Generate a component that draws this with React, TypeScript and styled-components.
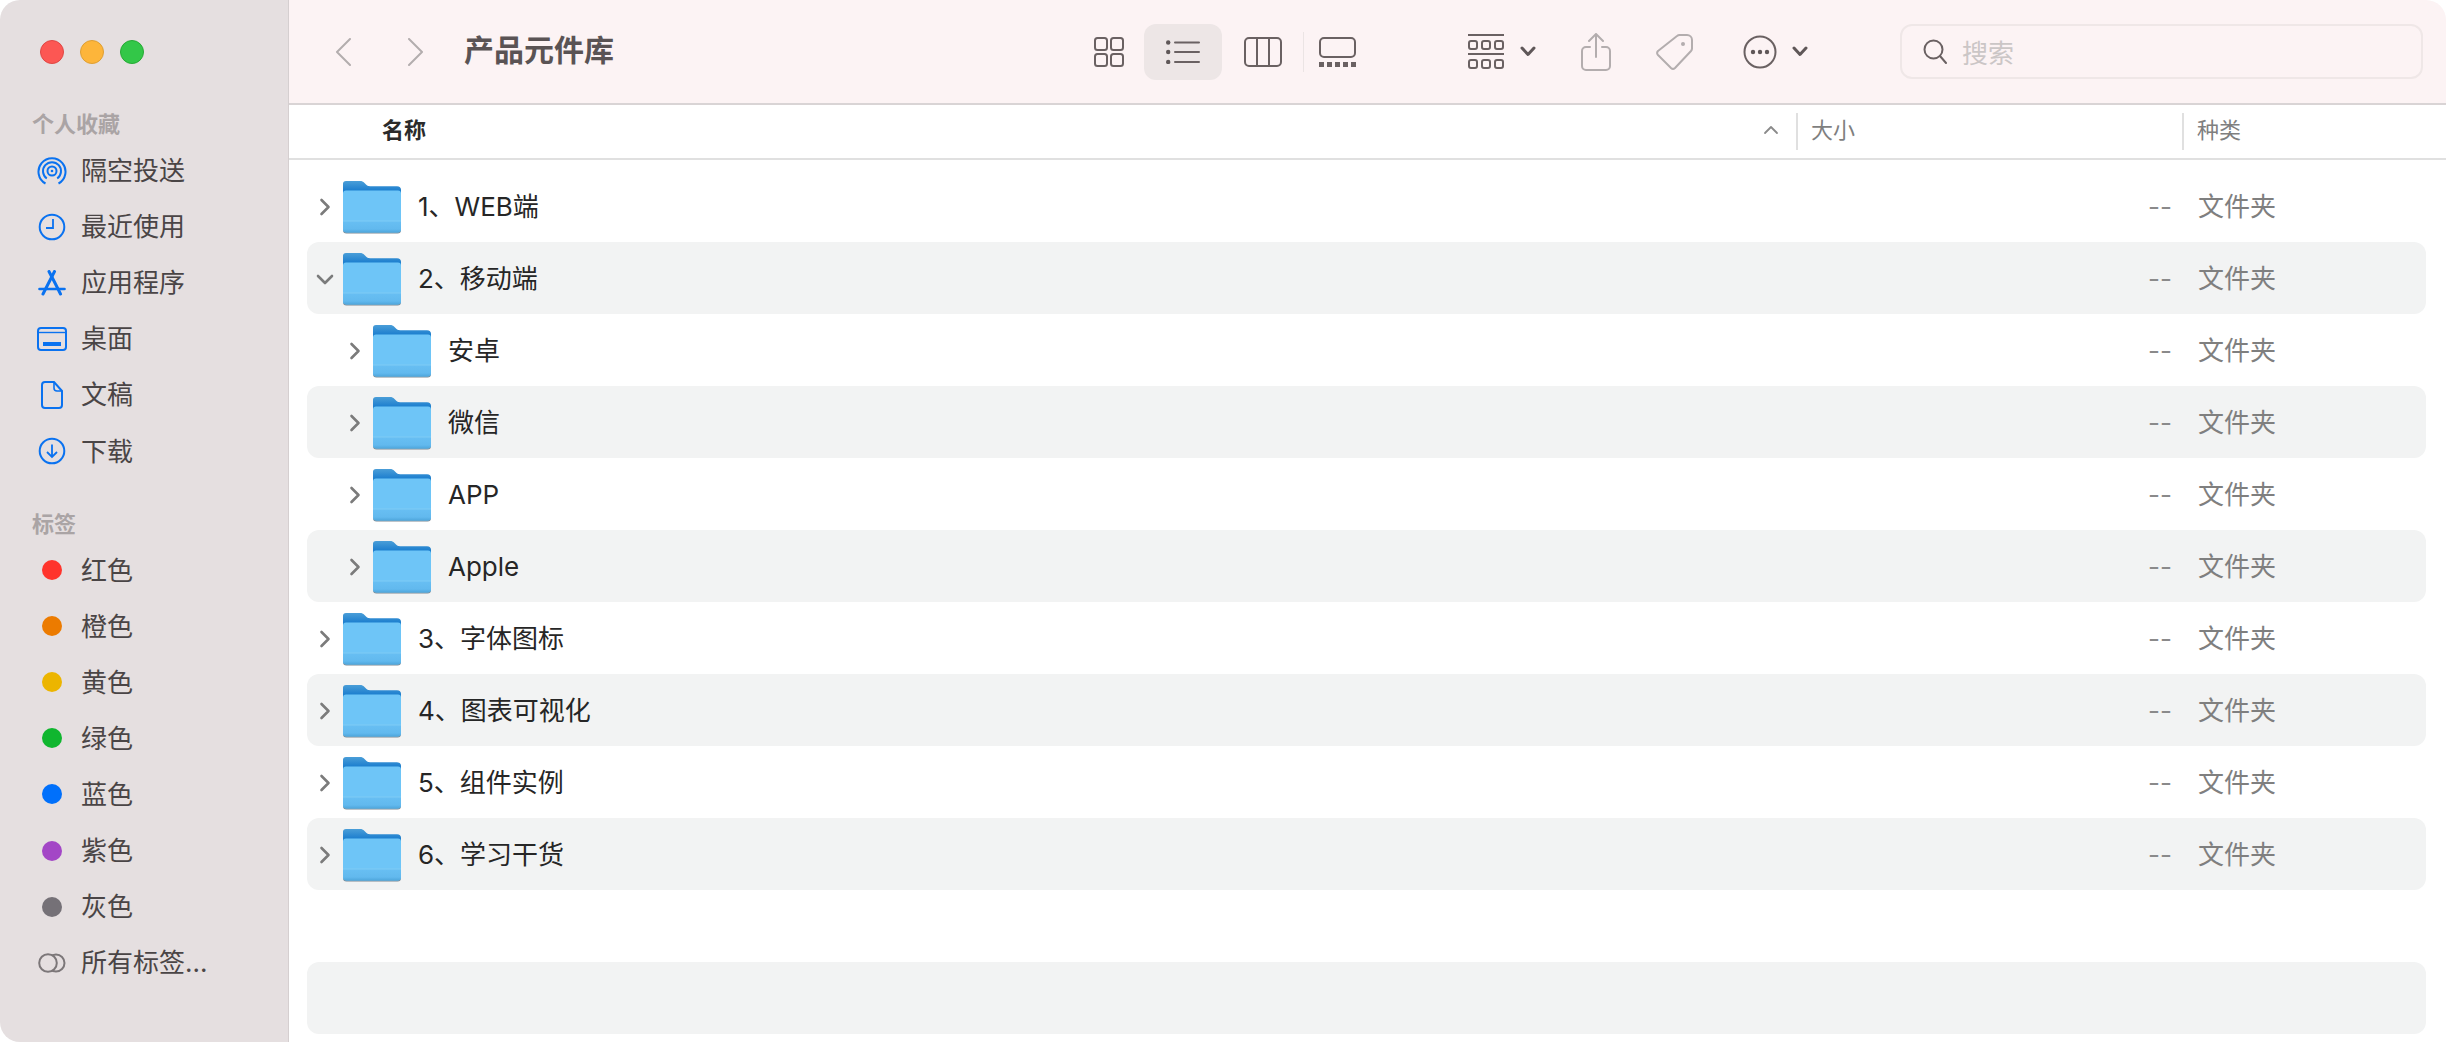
import React from "react";
import styled, { createGlobalStyle } from "styled-components";

const GlobalStyle = createGlobalStyle`
  html, body {
    margin: 0;
    padding: 0;
    background: #fff;
  }
  * {
    box-sizing: border-box;
  }
  body {
    font-family: Inter, "Noto Sans CJK SC", sans-serif;
  }
`;

const favorites = [
  { name: "隔空投送", icon: <AirDropIcon /> },
  { name: "最近使用", icon: <ClockIcon /> },
  { name: "应用程序", icon: <AppsIcon /> },
  { name: "桌面", icon: <DesktopIcon /> },
  { name: "文稿", icon: <DocIcon /> },
  { name: "下载", icon: <DownloadIcon /> },
];

const tags = [
  { name: "红色", color: "#ff342c" },
  { name: "橙色", color: "#ec7b00" },
  { name: "黄色", color: "#ecb500" },
  { name: "绿色", color: "#10b62f" },
  { name: "蓝色", color: "#0070fb" },
  { name: "紫色", color: "#a346c6" },
  { name: "灰色", color: "#757177" },
];

const files = [
  { name: "1、WEB端", depth: 0 },
  { name: "2、移动端", depth: 0, open: true },
  { name: "安卓", depth: 1 },
  { name: "微信", depth: 1 },
  { name: "APP", depth: 1 },
  { name: "Apple", depth: 1 },
  { name: "3、字体图标", depth: 0 },
  { name: "4、图表可视化", depth: 0 },
  { name: "5、组件实例", depth: 0 },
  { name: "6、学习干货", depth: 0 },
];

const App = () => {
  return (
    <Window>
      <GlobalStyle />
      <Sidebar>
        <Lights>
          <Light $color="#fc5753" $edge="#df4744" />
          <Light $color="#fdb53a" $edge="#de9f34" />
          <Light $color="#33c748" $edge="#27aa35" />
        </Lights>
        <SectionLabel>个人收藏</SectionLabel>
        {favorites.map((f) => (
          <SideItem key={f.name}>
            <SideIcon>{f.icon}</SideIcon>
            <SideText>{f.name}</SideText>
          </SideItem>
        ))}
        <SectionLabel $second>标签</SectionLabel>
        {tags.map((t) => (
          <SideItem key={t.name}>
            <SideIcon>
              <TagDot $color={t.color} />
            </SideIcon>
            <SideText>{t.name}</SideText>
          </SideItem>
        ))}
        <SideItem>
          <SideIcon>
            <AllTagsIcon />
          </SideIcon>
          <SideText>所有标签...</SideText>
        </SideItem>
      </Sidebar>
      <Main>
        <Toolbar>
          <ToolIcon width="16" height="28" viewBox="0 0 16 28" $muted>
            <path d="M15 1 2 14l13 13" />
          </ToolIcon>
          <ToolIcon width="16" height="28" viewBox="0 0 16 28" $muted $gap={57}>
            <path d="M1 1l13 13L1 27" />
          </ToolIcon>
          <Title>产品元件库</Title>
          <ViewGroup>
            <ToolIcon width="30" height="30" viewBox="0 0 30 30">
              <rect x="1" y="1" width="12" height="12" rx="2.5" />
              <rect x="17" y="1" width="12" height="12" rx="2.5" />
              <rect x="1" y="17" width="12" height="12" rx="2.5" />
              <rect x="17" y="17" width="12" height="12" rx="2.5" />
            </ToolIcon>
            <ActiveView>
              <ToolIcon width="34" height="24" viewBox="0 0 34 24">
                <circle cx="2.2" cy="2.5" r="2.2" fill="#5f5758" stroke="none" />
                <circle cx="2.2" cy="12" r="2.2" fill="#5f5758" stroke="none" />
                <circle cx="2.2" cy="22" r="2.2" fill="#5f5758" stroke="none" />
                <path d="M9 2.5h24M9 12h24M9 22h24" />
              </ToolIcon>
            </ActiveView>
            <ToolIcon width="38" height="30" viewBox="0 0 38 30" $gap={22}>
              <rect x="1" y="1" width="36" height="28" rx="4" />
              <path d="M13 1v28M25 1v28" />
            </ToolIcon>
            <ViewDivider />
            <ToolIcon width="37" height="30" viewBox="0 0 37 30" $gap={15}>
              <rect x="1" y="1" width="35" height="19" rx="4" />
              <path
                d="M0 25h5v5H0zM8 25h5v5H8zM16 25h5v5h-5zM24 25h5v5h-5zM32 25h5v5h-5z"
                fill="#6a6162"
                stroke="none"
              />
            </ToolIcon>
            <ToolIcon width="36" height="36" viewBox="0 0 36 36" $gap={112}>
              <path d="M0 1h36M0 20h36" />
              <rect x="1" y="7" width="8" height="8" rx="2" />
              <rect x="14" y="7" width="8" height="8" rx="2" />
              <rect x="27" y="7" width="8" height="8" rx="2" />
              <rect x="1" y="26" width="8" height="8" rx="2" />
              <rect x="14" y="26" width="8" height="8" rx="2" />
              <rect x="27" y="26" width="8" height="8" rx="2" />
            </ToolIcon>
            <MenuChevron $gap={16} />
            <ToolIcon width="30" height="38" viewBox="0 0 30 38" $muted $gap={45}>
              <path d="M9 14H5a4 4 0 0 0-4 4v15a4 4 0 0 0 4 4h20a4 4 0 0 0 4-4V18a4 4 0 0 0-4-4h-4" />
              <path d="M15 24V2M8 8l7-7 7 7" />
            </ToolIcon>
            <ToolIcon width="38" height="38" viewBox="0 0 38 38" $muted $gap={45}>
              <path d="M24 2h7a5 5 0 0 1 5 5v8a4 4 0 0 1-1 3L19 35a3 3 0 0 1-4 0L2 22a3 3 0 0 1 0-4L21 3a4 4 0 0 1 3-1z" />
              <circle cx="27" cy="11" r="2" fill="#b3adae" stroke="none" />
            </ToolIcon>
            <ToolIcon width="34" height="34" viewBox="0 0 34 34" $gap={49}>
              <circle cx="17" cy="17" r="15.5" />
              <circle cx="10" cy="17" r="2.2" fill="#5f5758" stroke="none" />
              <circle cx="17" cy="17" r="2.2" fill="#5f5758" stroke="none" />
              <circle cx="24" cy="17" r="2.2" fill="#5f5758" stroke="none" />
            </ToolIcon>
            <MenuChevron $gap={15} />
          </ViewGroup>
          <SearchBox>
            <ToolIcon width="24" height="26" viewBox="0 0 24 26">
              <circle cx="10.5" cy="10.5" r="9" />
              <path d="M17 17l6 7" />
            </ToolIcon>
            <SearchHint>搜索</SearchHint>
          </SearchBox>
        </Toolbar>
        <ColumnHeader>
          <NameHead>
            名称
            <SortMark width="16" height="10" viewBox="0 0 16 10">
              <path d="M2 8l6-6 6 6" />
            </SortMark>
          </NameHead>
          <OtherHead>大小</OtherHead>
          <OtherHead>种类</OtherHead>
        </ColumnHeader>
        <FileList>
          {files.map((f, i) => (
            <Row key={f.name} $striped={i % 2 === 1}>
              <NameCell $depth={f.depth}>
                <Disclosure $open={f.open} />
                <FolderIcon />
                <FileName>{f.name}</FileName>
              </NameCell>
              <SizeCell>--</SizeCell>
              <KindCell>文件夹</KindCell>
            </Row>
          ))}
          <Row />
          <Row $striped />
        </FileList>
      </Main>
    </Window>
  );
};

function AirDropIcon() {
  return (
    <svg width="30" height="30" viewBox="0 0 30 30" fill="none" stroke="#0a72f0" strokeWidth="2">
      <path d="M8.5 27.5A13.5 13.5 0 1 1 21.5 27.5" />
      <path d="M9.8 22.5A9 9 0 1 1 20.2 22.5" />
      <circle cx="15" cy="15" r="4.5" />
      <circle cx="15" cy="15" r="1.3" fill="#0a72f0" stroke="none" />
    </svg>
  );
}

function ClockIcon() {
  return (
    <svg width="28" height="28" viewBox="0 0 28 28" fill="none" stroke="#0a72f0" strokeWidth="2">
      <circle cx="14" cy="14" r="12.3" />
      <path d="M15 6v9H8" strokeWidth="1.8" />
    </svg>
  );
}

function AppsIcon() {
  return (
    <svg width="28" height="26" viewBox="0 0 28 26" fill="none" stroke="#0a72f0" strokeWidth="3" strokeLinecap="round">
      <path d="M11 1.5 17 13l5.5 11" />
      <path d="M16.5 1.5 5 24" />
      <path d="M1.5 19h25" strokeWidth="2.6" />
    </svg>
  );
}

function DesktopIcon() {
  return (
    <svg width="30" height="24" viewBox="0 0 30 24" fill="none" stroke="#0a72f0" strokeWidth="2">
      <rect x="1" y="1" width="28" height="22" rx="3" />
      <path d="M1 5.500h28" strokeWidth="1.4" />
      <rect x="6" y="15" width="18" height="4" fill="#0a72f0" stroke="none" />
    </svg>
  );
}

function DocIcon() {
  return (
    <svg width="22" height="28" viewBox="0 0 22 28" fill="none" stroke="#0a72f0" strokeWidth="2">
      <path d="M4 1h9l8 9v14a3 3 0 0 1-3 3H4a3 3 0 0 1-3-3V4a3 3 0 0 1 3-3z" />
      <path d="M13 1v6a3 3 0 0 0 3 3h5" strokeWidth="1.6" />
    </svg>
  );
}

function DownloadIcon() {
  return (
    <svg width="28" height="28" viewBox="0 0 28 28" fill="none" stroke="#0a72f0" strokeWidth="2">
      <circle cx="14" cy="14" r="12.3" />
      <path d="M14 7.500v12M9 15l5 5 5-5" strokeWidth="1.8" />
    </svg>
  );
}

function AllTagsIcon() {
  return (
    <svg width="28" height="20" viewBox="0 0 28 20" fill="none" stroke="#7c7779" strokeWidth="2">
      <circle cx="18" cy="10" r="8.5" />
      <circle cx="10" cy="10" r="8.8" fill="#e5dfe0" />
    </svg>
  );
}

function FolderIcon() {
  return (
    <svg width="58" height="53" viewBox="0 0 58 53">
      <defs>
        <linearGradient id="folder-back" x1="0" y1="0" x2="0" y2="1">
          <stop offset="0" stopColor="#4a9ed8" />
          <stop offset="0.3" stopColor="#1f80cf" />
          <stop offset="1" stopColor="#1f80cf" />
        </linearGradient>
        <linearGradient id="folder-band" x1="0" y1="0" x2="0" y2="1">
          <stop offset="0" stopColor="#68bff3" />
          <stop offset="0.7" stopColor="#62b9ee" />
          <stop offset="1" stopColor="#4ea6dc" />
        </linearGradient>
      </defs>
      <path
        d="M3 1h14c2 0 3 .6 4.500 2l2 2c1 .8 2 1.200 3.500 1.200H54a4 4 0 0 1 4 4V49a3.500 3.500 0 0 1-3.500 3.500h-51A3.500 3.500 0 0 1 0 49V4a3 3 0 0 1 3-3z"
        fill="#7e8a93"
      />
      <path
        d="M3 0h14c2 0 3 .6 4.500 2l2 2c1 .8 2 1.200 3.500 1.200H54a4 4 0 0 1 4 4V30H0V3a3 3 0 0 1 3-3z"
        fill="url(#folder-back)"
      />
      <path
        d="M3 9.500h52a3 3 0 0 1 3 3V48a3.500 3.500 0 0 1-3.500 3.500h-51A3.500 3.500 0 0 1 0 48V12.500a3 3 0 0 1 3-3z"
        fill="#6ec5f7"
      />
      <path
        d="M0 40h58v8a3.500 3.500 0 0 1-3.500 3.500h-51A3.500 3.500 0 0 1 0 48z"
        fill="url(#folder-band)"
      />
      <path d="M0 40h58" stroke="#7fcbf5" strokeWidth="1" />
    </svg>
  );
}

const Window = styled.div`
  display: flex;
  width: 100vw;
  height: 100vh;
  overflow: hidden;
  border-radius: 20px;
  background: #fff;
`;

const Sidebar = styled.aside`
  flex: 0 0 289px;
  background: #e5dfe0;
  border-right: 1px solid #d5cfd0;
  color: #4a4546;
`;

const Lights = styled.div`
  display: flex;
  gap: 16px;
  padding: 40px 0 0 40px;
  height: 106px;
`;

const Light = styled.span<{ $color: string; $edge: string }>`
  width: 24px;
  height: 24px;
  border-radius: 50%;
  background: ${(p) => p.$color};
  border: 1px solid ${(p) => p.$edge};
`;

const SectionLabel = styled.div<{ $second?: boolean }>`
  height: 36px;
  line-height: 36px;
  margin-top: ${(p) => (p.$second ? "27px" : "0")};
  padding-left: 32px;
  font-size: 22px;
  font-weight: 700;
  color: #aaa4a5;
`;

const SideItem = styled.div`
  display: flex;
  align-items: center;
  height: 56.1px;
  padding: 1px 0 0 36px;
  font-size: 26px;
  line-height: 1;
`;

const SideIcon = styled.span`
  display: flex;
  align-items: center;
  justify-content: center;
  width: 32px;
  margin-right: 13px;
`;

const SideText = styled.span`
  padding-top: 1px;
`;

const TagDot = styled.span<{ $color: string }>`
  width: 20px;
  height: 20px;
  border-radius: 50%;
  background: ${(p) => p.$color};
`;

const Main = styled.main`
  flex: 1;
  min-width: 0;
  display: flex;
  flex-direction: column;
`;

const Toolbar = styled.header`
  display: flex;
  align-items: center;
  height: 105px;
  flex: none;
  padding: 0 23px 0 46px;
  background: #fcf3f4;
  border-bottom: 2px solid #d9d4d5;
`;

const ToolIcon = styled.svg<{ $muted?: boolean; $gap?: number }>`
  flex: none;
  display: block;
  margin-left: ${(p) => p.$gap || 0}px;
  fill: none;
  stroke: ${(p) => (p.$muted ? "#b3adae" : "#6a6162")};
  stroke-width: 2;
  stroke-linecap: round;
  stroke-linejoin: round;
`;

const Title = styled.h1`
  margin: 0 0 3px 40px;
  font-size: 30px;
  font-weight: 700;
  line-height: 1;
  color: #5a5354;
`;

const ViewGroup = styled.div`
  display: flex;
  align-items: center;
  margin-left: auto;
`;

const ActiveView = styled.div`
  display: flex;
  align-items: center;
  justify-content: center;
  width: 78px;
  height: 56px;
  margin-left: 20px;
  border-radius: 12px;
  background: #ede6e6;
`;

const ViewDivider = styled.span`
  width: 1px;
  height: 40px;
  margin-left: 21px;
  background: #ebe4e4;
`;

const MenuChevronSvg = styled.svg<{ $gap: number }>`
  flex: none;
  margin-left: ${(p) => p.$gap}px;
  fill: none;
  stroke: #5f5758;
  stroke-width: 3;
  stroke-linecap: round;
  stroke-linejoin: round;
`;

const MenuChevron = ({ $gap }: { $gap: number }) => (
  <MenuChevronSvg $gap={$gap} width="16" height="11" viewBox="0 0 16 11">
    <path d="M2 2l6 6.500L14 2" />
  </MenuChevronSvg>
);

const SearchBox = styled.div`
  display: flex;
  align-items: center;
  flex: none;
  width: 523px;
  height: 55px;
  margin-left: 92px;
  padding-left: 21px;
  border: 2px solid #efe7e7;
  border-radius: 12px;
`;

const SearchHint = styled.span`
  margin: 5px 0 0 15px;
  font-size: 26px;
  line-height: 1;
  color: #cbc6c6;
`;

const ColumnHeader = styled.div`
  display: grid;
  grid-template-columns: 1507px 386px 1fr;
  align-items: center;
  height: 55px;
  flex: none;
  border-bottom: 2px solid #e0e0e0;
  font-size: 22px;
  line-height: 1;
`;

const NameHead = styled.div`
  display: flex;
  align-items: center;
  justify-content: space-between;
  padding: 0 17px 3px 93px;
  font-weight: 700;
  color: #2b2b2b;
`;

const SortMark = styled.svg`
  fill: none;
  stroke: #8a8a8a;
  stroke-width: 1.8;
  stroke-linecap: round;
  stroke-linejoin: round;
`;

const OtherHead = styled.div`
  display: flex;
  align-items: center;
  height: 37px;
  padding: 0 0 3px 13px;
  border-left: 2px solid #e0e0e0;
  color: #7f7f7f;
`;

const FileList = styled.div`
  padding: 10px 20px 0 18px;
`;

const Row = styled.div<{ $striped?: boolean }>`
  display: grid;
  grid-template-columns: 1fr auto 254px;
  align-items: center;
  height: 72px;
  padding-top: 2px;
  border-radius: 12px;
  background: ${(p) => (p.$striped ? "#f2f3f3" : "transparent")};
`;

const NameCell = styled.div<{ $depth: number }>`
  display: flex;
  align-items: center;
  padding-left: ${(p) => 9 + p.$depth * 30}px;
`;

const DisclosureSvg = styled.svg`
  flex: none;
  margin-right: 9px;
  fill: none;
  stroke: #7b7b7b;
  stroke-width: 2.6;
  stroke-linecap: round;
  stroke-linejoin: round;
`;

const Disclosure = ({ $open }: { $open?: boolean }) => (
  <DisclosureSvg width="18" height="18" viewBox="0 0 18 18">
    <path d={$open ? "M2 6l7 7 7-7" : "M5.500 2l7 7-7 7"} />
  </DisclosureSvg>
);

const FileName = styled.span`
  margin-left: 17px;
  font-size: 26px;
  line-height: 1;
  color: #262626;
`;

const SizeCell = styled.span`
  font-size: 26px;
  line-height: 1;
  color: #8a8a8a;
`;

const KindCell = styled.span`
  padding-left: 26px;
  font-size: 26px;
  line-height: 1;
  color: #7f7f7f;
`;

export default App;
